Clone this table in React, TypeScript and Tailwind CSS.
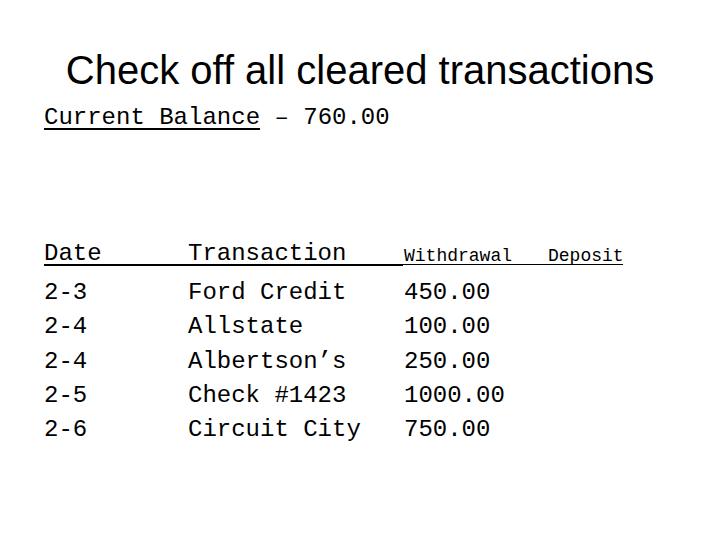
import React from 'react';

const rows = [
    { date: '2-3', name: 'Ford Credit', amount: '450.00' },
    { date: '2-4', name: 'Allstate', amount: '100.00' },
    { date: '2-4', name: 'Albertson’s', amount: '250.00' },
    { date: '2-5', name: 'Check #1423', amount: '1000.00' },
    { date: '2-6', name: 'Circuit City', amount: '750.00' },
];

const App = () => {
    return (
        <div className="w-[720px] h-[540px] bg-white text-black overflow-hidden">
            <h1 className="pt-[50px] text-center text-[40px] leading-none font-['Liberation_Sans',Arial,sans-serif]">
                Check off all cleared transactions
            </h1>

            <div className="px-[44px] font-['Liberation_Mono','Courier_New',monospace]">
                <p className="mt-[16px] text-[24px] leading-none whitespace-pre">
                    <span className="underline decoration-[1.5px] underline-offset-4">Current Balance</span> – 760.00
                </p>

                {/* Header row */}
                <div className="mt-[113px] flex items-end">
                    <div className="w-[144px] text-[24px] leading-[21px] border-b-2 border-black">Date</div>
                    <div className="w-[215px] text-[24px] leading-[21px] border-b-2 border-black">Transaction</div>
                    <div className="w-[145px] mb-px text-[18px] leading-[15px] border-b border-black pl-px">Withdrawal</div>
                    <div className="w-[75px] mb-px text-[18px] leading-[15px] border-b border-black">Deposit</div>
                </div>

                {/* Transactions */}
                <div className="mt-[10px] text-[24px] leading-[34.25px]">
                    {rows.map((row, i) => (
                        <div key={i} className="flex whitespace-pre">
                            <div className="w-[144px]">{row.date}</div>
                            <div className="w-[216px]">{row.name}</div>
                            <div>{row.amount}</div>
                        </div>
                    ))}
                </div>
            </div>
        </div>
    );
};

export default App;
